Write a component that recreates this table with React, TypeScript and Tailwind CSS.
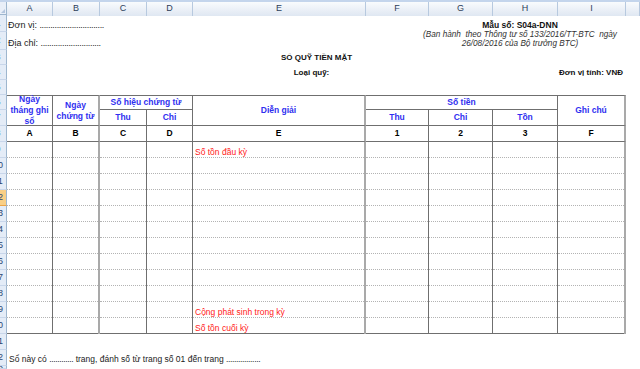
import React from 'react';

const LETTERS = ['A', 'B', 'C', 'D', 'E', 'F', 'G', 'H', 'I', ''];

// sheet row heights (rows 1..23), written out so tailwind sees them
const ROW_H = [
  'h-[17px]', 'h-[18px]', 'h-[15px]', 'h-[15px]', 'h-[15px]', 'h-[15px]', 'h-[16px]', 'h-[16px]',
  'h-[16px]', 'h-[16px]', 'h-[16px]', 'h-[16px]', 'h-[16px]', 'h-[16px]', 'h-[16px]', 'h-[16px]',
  'h-[16px]', 'h-[16px]', 'h-[16px]', 'h-[16px]', 'h-[16px]', 'h-[16px]', 'h-[3px]',
];

const DARK = 'border-r border-r-[#6f6f6f]';
const LIGHT = 'border-r-2 border-r-[#a9a9a9]';
const RB = [DARK, LIGHT, DARK, DARK, LIGHT, DARK, DARK, DARK, LIGHT];
const COL_W = ['w-[46px]', 'w-[47px]', 'w-[47px]', 'w-[46px]', 'w-[173px]', 'w-[63px]', 'w-[64px]', 'w-[65px]', 'w-[68px]'];

const head = 'flex items-center justify-center text-center font-bold text-[8.5px] leading-[11px] text-[#2f2ff0]';
const codeCell = 'flex items-center justify-center font-bold text-[8.5px] text-black border-b border-b-[#6f6f6f]';

const dataText: Record<number, string> = {
  0: 'Số tồn đầu kỳ',
  10: 'Cộng phát sinh trong kỳ',
  11: 'Số tồn cuối kỳ',
};

const Dots = ({ n }: { n: number }) => <span className="tracking-[-0.35px]">{'.'.repeat(n)}</span>;

export default function App() {
  return (
    <div className="w-[640px] h-[369px] overflow-hidden bg-white font-['Liberation_Sans',Arial,sans-serif] text-[#222]">
      {/* column headers */}
      <div className="h-[2px] bg-[#c4d5ec]" />
      <div className="flex h-[13px] border-b border-b-[#9eb6ce]">
        <div className="w-[7px] shrink-0 border-r border-r-[#9eb6ce] bg-[#e9eff8] relative">
          <div className="absolute right-[1px] bottom-[1px] w-0 h-0 border-l-[4px] border-l-transparent border-b-[4px] border-b-[#b4c6de]" />
        </div>
        <div className="grid grid-cols-[46px_47px_47px_46px_173px_63px_64px_65px_68px_14px]">
          {LETTERS.map((l, i) => (
            <div
              key={i}
              className="flex items-center justify-center text-[9px] text-[#2d3f5a] bg-linear-to-b from-[#f9fbfd] to-[#dfe7f2] border-r border-r-[#b7c9df]"
            >
              {l}
            </div>
          ))}
        </div>
      </div>

      <div className="flex">
        {/* row headers, scrolled so only the right edge shows */}
        <div className="w-[7px] shrink-0 flex flex-col">
          {ROW_H.map((h, i) => (
            <div
              key={i}
              className={`${h} overflow-hidden flex items-center border-r border-r-[#9eb6ce] border-b ${
                i === 11 ? 'bg-[#f9cf86] border-b-[#eba447]' : 'bg-[#e4ecf7] border-b-[#c8d6ea]'
              }`}
            >
              <div className="w-[18px] -ml-[11px] shrink-0 text-center text-[9px] leading-none text-[#2a4674]">
                {i + 1}
              </div>
            </div>
          ))}
        </div>

        <div className="grid grid-cols-[46px_47px_47px_46px_173px_63px_64px_65px_68px_14px] grid-rows-[17px_18px_15px_15px_15px_15px_16px_16px_repeat(14,16px)_3px]">
          <div className="col-start-1 col-span-3 row-start-1 flex items-end pb-[1px] pl-[1px] text-[9px] leading-[11px] whitespace-nowrap">
            <span>
              Đơn vị: <Dots n={30} />
            </span>
          </div>
          <div className="col-start-1 col-span-3 row-start-2 flex items-end pb-[1px] pl-[1px] text-[9px] leading-[11px] whitespace-nowrap">
            <span>
              Địa chỉ: <Dots n={28} />
            </span>
          </div>

          <div className="col-start-6 col-span-4 row-start-1 row-span-2 flex flex-col items-center pt-[5px] pl-[48px] whitespace-pre text-[8.5px]">
            <div className="font-bold leading-[10px] text-[#111]">Mẫu số: S04a-DNN</div>
            <div className="italic text-[8.2px] leading-[9px] text-[#333] text-center">
              {'(Ban hành  theo Thông tư số 133/2016/TT-BTC  ngày'}
              <br />
              {'26/08/2016 của Bộ trưởng BTC)'}
            </div>
          </div>

          <div className="col-start-1 col-span-9 row-start-3 flex items-center justify-center font-bold text-[8px] text-[#111]">
            SỔ QUỸ TIỀN MẶT
          </div>
          <div className="col-start-1 col-span-9 row-start-4 flex items-center justify-center pr-[10px] font-bold text-[8px] text-[#111]">
            Loại quỹ:
          </div>
          <div className="col-start-9 row-start-4 flex items-center justify-end pr-[3px] font-bold text-[8px] text-[#111] whitespace-nowrap">
            Đơn vị tính: VNĐ
          </div>

          {/* the cash book table */}
          <div className="col-start-1 col-span-9 row-start-6 row-span-15 flex flex-col">
            <div className="grid grid-cols-[46px_47px_47px_46px_173px_63px_64px_65px_68px] grid-rows-[15px_16px_16px]">
              <div className={`${head} row-span-2 border-t border-t-[#6f6f6f] border-b border-b-[#6f6f6f] ${RB[0]}`}>
                Ngày
                <br />
                tháng ghi
                <br />
                sổ
              </div>
              <div className={`${head} row-span-2 border-t border-t-[#6f6f6f] border-b border-b-[#6f6f6f] ${RB[1]}`}>
                Ngày
                <br />
                chứng từ
              </div>
              <div className={`${head} col-span-2 border-t border-t-[#6f6f6f] border-b border-b-[#6f6f6f] ${RB[3]}`}>
                Số hiệu chứng từ
              </div>
              <div className={`${head} row-span-2 border-t border-t-[#6f6f6f] border-b border-b-[#6f6f6f] ${RB[4]}`}>
                Diễn giải
              </div>
              <div className={`${head} col-span-3 border-t border-t-[#6f6f6f] border-b border-b-[#6f6f6f] ${RB[7]}`}>
                Số tiền
              </div>
              <div className={`${head} row-span-2 border-t border-t-[#6f6f6f] border-b border-b-[#6f6f6f] ${RB[8]}`}>
                Ghi chú
              </div>
              <div className={`${head} border-b border-b-[#6f6f6f] ${RB[2]}`}>Thu</div>
              <div className={`${head} border-b border-b-[#6f6f6f] ${RB[3]}`}>Chi</div>
              <div className={`${head} border-b border-b-[#6f6f6f] ${RB[5]}`}>Thu</div>
              <div className={`${head} border-b border-b-[#6f6f6f] ${RB[6]}`}>Chi</div>
              <div className={`${head} border-b border-b-[#6f6f6f] ${RB[7]}`}>Tồn</div>
              {['A', 'B', 'C', 'D', 'E', '1', '2', '3', 'F'].map((c, i) => (
                <div key={c} className={`${codeCell} ${RB[i]}`}>
                  {c}
                </div>
              ))}
            </div>

            <div className="flex">
              {RB.map((rb, col) => (
                <div key={col} className={`${rb} ${COL_W[col]} flex flex-col`}>
                  {Array.from({ length: 12 }).map((_, r) => (
                    <div
                      key={r}
                      className={`h-[16px] flex items-end pl-[2px] text-[8.5px] leading-[10px] text-[#ff1a1a] whitespace-nowrap ${
                        r === 11 ? 'border-b border-b-[#6f6f6f]' : 'border-b border-dotted border-b-[#b3b3b3]'
                      }`}
                    >
                      {col === 4 ? dataText[r] : null}
                    </div>
                  ))}
                </div>
              ))}
            </div>
          </div>

          <div className="col-start-1 col-span-9 row-start-22 flex items-end pb-[1px] pl-[2px] text-[8.5px] leading-[11px] whitespace-nowrap">
            <span>
              Sổ này có <Dots n={12} /> trang, đánh số từ trang số 01 đến trang <Dots n={17} />
            </span>
          </div>
        </div>
      </div>
    </div>
  );
}
